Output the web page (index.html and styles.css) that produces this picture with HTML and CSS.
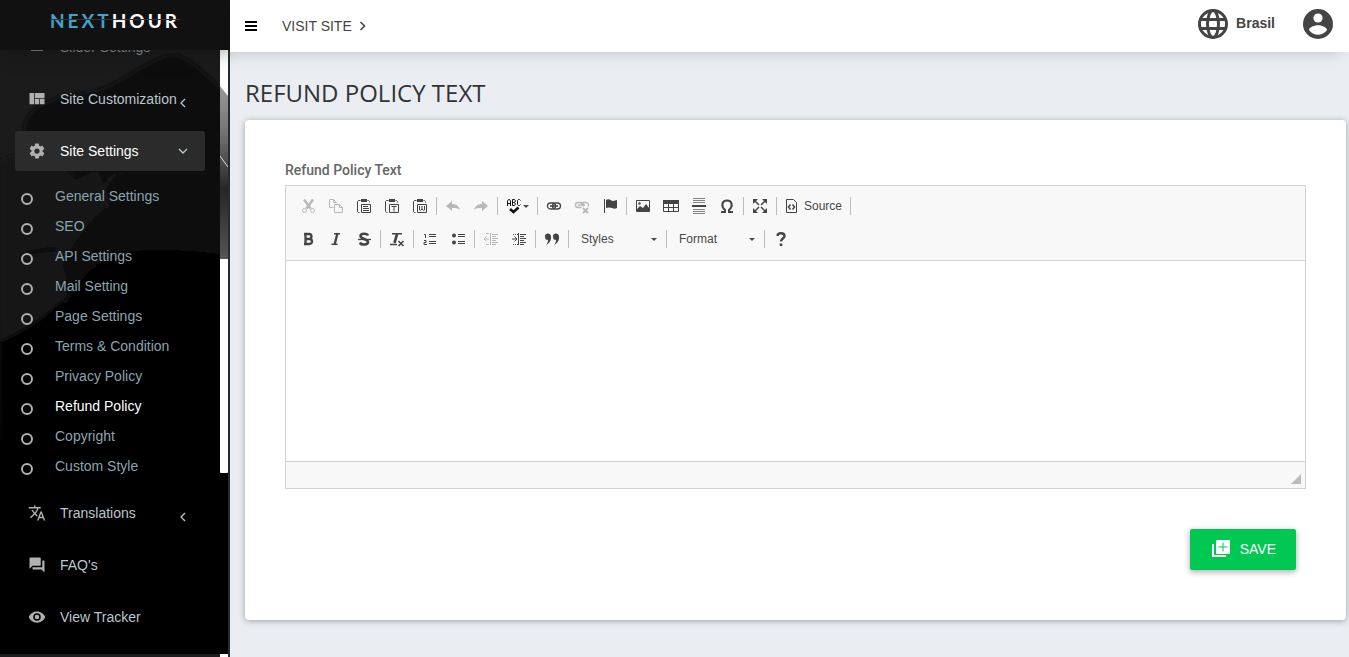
FILE: index.html
```html
<!DOCTYPE html>
<html lang="en">
<head>
<meta charset="utf-8">
<title>Refund Policy Text - Nexthour</title>
<link rel="stylesheet" href="styles.css">
</head>
<body>
<div class="app">
  <aside class="sidebar">
    <svg class="photo" viewBox="0 0 228 607" preserveAspectRatio="xMidYMin slice" aria-hidden="true">
      <defs>
        <linearGradient id="fade" x1="0" y1="0" x2="0" y2="1"><stop offset="0" stop-color="#1b1b1b"/><stop offset=".5" stop-color="#191919"/><stop offset=".75" stop-color="#000"/></linearGradient>
        <linearGradient id="hat" x1="0" y1="0" x2="0" y2="1"><stop offset="0" stop-color="#101010"/><stop offset="1" stop-color="#050505"/></linearGradient>
        <filter id="soft"><feGaussianBlur stdDeviation="2"/></filter>
      </defs>
      <rect width="228" height="607" fill="url(#fade)"/>
      <g filter="url(#soft)">
        <path d="M24 76C28 58 50 46 84 43C116 39 145 10 169 5C184 1 201 20 228 44V607H0V112C35 100 70 132 75 125C66 120 22 103 24 76Z" fill="url(#hat)"/>
        <path d="M0 112C28 96 62 110 75 130L98 120L110 155C87 170 77 190 62 214C70 233 67 245 58 257C46 270 33 275 0 292Z" fill="#161616"/>
        <path d="M12 207Q35 197 57 197L56 201Q35 203 12 207Z" fill="#070707"/>
        <path d="M58 162Q70 165 72 185M108 158Q98 144 108 132Q117 119 128 126" fill="none" stroke="#1c1c1c" stroke-width="2"/>
        <path d="M0 292C36 275 63 255 86 223C102 202 140 193 228 205V607H0Z" fill="#040404"/>
        <path d="M64 253Q85 209 129 196Q168 191 228 200" fill="none" stroke="#141414" stroke-width="3"/>
        <path d="M86 43Q143 45 186 80Q213 106 228 118" fill="none" stroke="#222"/>
      </g>
      <rect y="390" width="228" height="217" fill="#000"/>
    </svg>
    <div class="brand"><a class="logo" href="#"><span class="logo-blue">NEXT</span>HOUR</a></div>
    <nav class="scroller" aria-label="Main">
      <ul class="menu">
        <li><a class="item faded" href="#"><svg class="ic" viewBox="0 0 24 24"><path d="M4 5h16v12H4z"/></svg><span>Slider Settings</span></a></li>
        <li><a class="item" href="#"><svg class="ic" viewBox="0 0 24 24"><path d="M2 4h6v15H2zM9 4h13v7H9zM9 12h6v7H9zM16 12h6v7h-6z"/></svg><span>Site Customization</span><svg class="caret" viewBox="0 0 12 12"><path d="M8 2L4 6l4 4"/></svg></a></li>
        <li><a class="item current" href="#"><svg class="ic" viewBox="0 0 24 24"><path fill-rule="evenodd" d="M19.400 13a8 8 0 0 0 0-2l2.100-1.600c.2-.2.300-.5.100-.7l-2-3.500c-.1-.2-.4-.3-.6-.2l-2.500 1a7 7 0 0 0-1.700-1l-.4-2.600c0-.2-.2-.4-.5-.4h-4c-.2 0-.4.200-.5.400L9 5a7 7 0 0 0-1.600 1L5 5c-.3-.1-.5 0-.7.200l-2 3.500c-.1.200 0 .5.200.7L4.600 11a8 8 0 0 0 0 2l-2.100 1.600c-.2.200-.3.500-.1.700l2 3.500c.1.200.4.300.6.200l2.500-1a7 7 0 0 0 1.600 1l.4 2.600c0 .2.300.400.500.400h4c.300 0 .500-.200.500-.400l.400-2.600a7 7 0 0 0 1.600-1l2.500 1c.3.100.500 0 .700-.200l2-3.500c.1-.200 0-.500-.200-.700zM12 15.500a3.500 3.500 0 1 1 0-7 3.500 3.500 0 0 1 0 7z"/></svg><span>Site Settings</span><svg class="caret" viewBox="0 0 12 12"><path d="M2 4l4 4 4-4"/></svg></a>
          <ul class="submenu">
            <li><a href="#">General Settings</a></li>
            <li><a href="#">SEO</a></li>
            <li><a href="#">API Settings</a></li>
            <li><a href="#">Mail Setting</a></li>
            <li><a href="#">Page Settings</a></li>
            <li><a href="#">Terms &amp; Condition</a></li>
            <li><a href="#">Privacy Policy</a></li>
            <li><a class="active" href="#" aria-current="page">Refund Policy</a></li>
            <li><a href="#">Copyright</a></li>
            <li><a href="#">Custom Style</a></li>
          </ul></li>
        <li><a class="item" href="#"><svg class="ic" viewBox="0 0 24 24"><path d="M12.900 15.100l-2.500-2.500a17.500 17.500 0 0 0 3.700-6.600H17V4h-7V2H8v2H1v2h11.200A15.700 15.700 0 0 1 9 11.400 15.600 15.600 0 0 1 6.700 8h-2a17.600 17.600 0 0 0 3 4.600l-5.100 5L4 19l5-5 3.100 3.100zM18.500 10h-2L12 22h2l1.100-3h4.800l1.100 3h2zm-2.600 7l1.600-4.300 1.600 4.300z"/></svg><span>Translations</span><svg class="caret" viewBox="0 0 12 12"><path d="M8 2L4 6l4 4"/></svg></a></li>
        <li><a class="item" href="#"><svg class="ic" viewBox="0 0 24 24"><path d="M21 6h-2v9H6v2c0 .6.400 1 1 1h11l4 4V7c0-.6-.4-1-1-1zm-4 6V3c0-.6-.4-1-1-1H3c-.6 0-1 .4-1 1v14l4-4h10c.6 0 1-.4 1-1z"/></svg><span>FAQ's</span></a></li>
        <li><a class="item" href="#"><svg class="ic" viewBox="0 0 24 24"><path fill-rule="evenodd" d="M12 4.500C7 4.500 2.700 7.600 1 12c1.700 4.400 6 7.500 11 7.500s9.300-3.100 11-7.500c-1.700-4.400-6-7.500-11-7.500zM12 17a5 5 0 1 1 0-10 5 5 0 0 1 0 10zm0-8a3 3 0 1 0 0 6 3 3 0 0 0 0-6z"/></svg><span>View Tracker</span></a></li>
      </ul>
    </nav>
    <div class="track" aria-hidden="true">
      <svg class="track-photo" viewBox="0 0 8 209" preserveAspectRatio="none"><defs><linearGradient id="coat" x1="0" y1="0" x2="0" y2="1"><stop offset="0" stop-color="#999"/><stop offset=".25" stop-color="#777"/><stop offset=".4" stop-color="#555"/><stop offset=".6" stop-color="#262626"/><stop offset="1" stop-color="#555"/></linearGradient></defs><path d="M0 0H8V209H0Z" fill="#fff"/><path d="M0 36L8 46V209H0Z" fill="url(#coat)"/><path d="M0 106L8 117" stroke="#ddd"/></svg>
      <span class="thumb"></span>
    </div>
  </aside>

  <div class="page">
    <header class="topbar">
      <button class="toggle" type="button" aria-label="Toggle navigation"><svg viewBox="0 0 12 12"><path d="M0 1h12v2H0zM0 5h12v2H0zM0 9h12v2H0z"/></svg></button>
      <a class="visit" href="#">VISIT SITE<svg viewBox="0 0 8 12"><path d="M1.500 2l4 4-4 4"/></svg></a>
      <a class="language" href="#"><svg viewBox="0 0 30 30"><g fill="none" stroke="#444" stroke-width="3"><circle cx="15" cy="15" r="13.500"/><ellipse cx="15" cy="15" rx="5.500" ry="13.500"/><path d="M2.500 10.500h25M2.500 19.500h25"/></g></svg>Brasil</a>
      <a class="account" href="#" aria-label="Account"><svg viewBox="0 0 30 30"><circle cx="15" cy="15" r="15" fill="#444"/><circle cx="15" cy="9" r="4.600" fill="#fff"/><path d="M6 21c0-3 6-4.700 9-4.700s9 1.700 9 4.700a11 11 0 0 1-18 0z" fill="#fff"/></svg></a>
    </header>
    <main class="content">
      <h1>REFUND POLICY TEXT</h1>
      <form class="card">
        <label class="field-label" for="policy">Refund Policy Text</label>
        <div class="editor">
          <div class="tools">
            <div class="row">
              <button type="button" class="tool off" aria-label="Cut"><svg viewBox="0 0 16 16"><path d="M4 1.500l6.500 9M13 1.500l-6.500 9" stroke-width="2.400"/><circle cx="4.500" cy="12.500" r="2"/><circle cx="12.500" cy="12.500" r="2"/></svg></button>
              <button type="button" class="tool off" aria-label="Copy"><svg viewBox="0 0 16 16"><path d="M5.500 9.500h-4v-8h4l3 3M5.500 1.500v3h3M6.500 6.500h5l3 3v5h-8zM11.500 6.500v3h3"/></svg></button>
              <button type="button" class="tool" aria-label="Paste"><svg viewBox="0 0 16 16"><path d="M3.500 14.500h-1l-1-1v-10l1-1h2M11.500 2.500h1l1 1v1M5.500 6.500h9v8h-9zM7 8.500h5M7 10.500h6M7 12.500h6"/><path class="s" d="M5 1h6v3H5z"/></svg></button>
              <button type="button" class="tool" aria-label="Paste as plain text"><svg viewBox="0 0 16 16"><path d="M3.500 14.500h-1l-1-1v-10l1-1h2M11.500 2.500h1l1 1v1M5.500 6.500h9v8h-9zM7.500 8.500h5M10 8.500v5"/><path class="s" d="M5 1h6v3H5z"/></svg></button>
              <button type="button" class="tool" aria-label="Paste from Word"><svg viewBox="0 0 16 16"><path d="M3.500 14.500h-1l-1-1v-10l1-1h2M11.500 2.500h1l1 1v1M5.500 6.500h9v8h-9zM7.500 8v4l1 .5 1.500-1.500 1.500 1.500 1-.5V8M10 8v3"/><path class="s" d="M5 1h6v3H5z"/></svg></button>
              <i class="sep"></i>
              <button type="button" class="tool off" aria-label="Undo"><svg viewBox="0 0 16 16"><path class="s" d="M1 8l6-5v3c4 0 7 2 8 6-2-2-4-2-8-2v3z"/></svg></button>
              <button type="button" class="tool off" aria-label="Redo"><svg viewBox="0 0 16 16"><path class="s" d="M15 8L9 3v3c-4 0-7 2-8 6 2-2 4-2 8-2v3z"/></svg></button>
              <i class="sep"></i>
              <button type="button" class="tool spell" aria-label="Spell check"><svg viewBox="0 0 16 16"><path d="M1.500 8V3l1-1.500h1l1 1.500v5M1.500 5.500h3M6.500 1.500h2l1 1.500-1 1.500h-2M8.500 4.500l1 1.500-1 1.500h-2v-6M14.500 2.500l-1-1h-1l-1 1v4l1 1h1l1-1"/><path d="M4 11l3.500 3 5-4.500" stroke-width="2.500"/></svg><b class="arrow"></b></button>
              <i class="sep"></i>
              <button type="button" class="tool" aria-label="Link"><svg viewBox="0 0 16 16"><rect x="1.500" y="5" width="8" height="6" rx="3" stroke-width="1.300"/><rect x="6.500" y="5" width="8" height="6" rx="3" stroke-width="1.300"/><path d="M4 8h8" stroke-width="1.600"/></svg></button>
              <button type="button" class="tool off" aria-label="Unlink"><svg viewBox="0 0 16 16"><path d="M7.500 9.500H4a2.500 2.500 0 0 1 0-5h3a2.500 2.500 0 0 1 2 4M7 7a2.500 2.500 0 0 1 2-2.500h3a2.500 2.500 0 0 1 2 4M4 7h7" stroke-width="1.400"/><path d="M9 10l5 5M14 10l-5 5" stroke-width="1.800"/></svg></button>
              <button type="button" class="tool" aria-label="Anchor"><svg viewBox="0 0 16 16"><path d="M2.500 1v14"/><path class="s" d="M4 2c3-2 5 1 7 1 1 0 3-1 4-1v8c-2 1-3 1-5 0-2-.8-4-.8-6 0z"/></svg></button>
              <i class="sep"></i>
              <button type="button" class="tool" aria-label="Image"><svg viewBox="0 0 16 16"><path d="M1.500 2.500h13v11h-13z"/><path class="s" d="M2 13v-2l3-3 3 2 3-4 3 4v3z"/><circle class="s" cx="4.500" cy="5.500" r="1.200"/></svg></button>
              <button type="button" class="tool" aria-label="Table"><svg viewBox="0 0 16 16"><path d="M.5 2.500h15v11H.5zM.5 9.500h15M5.500 5v8M10.500 5v8"/><path class="s" d="M0 2h16v4H0z"/></svg></button>
              <button type="button" class="tool" aria-label="Horizontal line"><svg viewBox="0 0 16 16"><path d="M2 .500h12M2 2.500h12M2 4.500h12M2 11.500h12M2 13.500h12M2 15.500h12" opacity=".65"/><path d="M1 8h14" stroke-width="2"/></svg></button>
              <button type="button" class="tool" aria-label="Special character"><svg viewBox="0 0 16 16"><path d="M2 14h4v-2C1.500 8 3 2.500 8 2.500s6.500 5.500 2 9.500v2h4" stroke-width="2"/></svg></button>
              <i class="sep"></i>
              <button type="button" class="tool" aria-label="Maximize"><svg viewBox="0 0 16 16"><path class="s" d="M1 1h5L1 6zM15 1v5l-5-5zM1 15v-5l5 5zM15 15h-5l5-5z"/><path d="M3 3l4 4M13 3L9 7M3 13l4-4M13 13L9 9" stroke-width="1.500"/></svg></button>
              <i class="sep"></i>
              <button type="button" class="tool source"><svg viewBox="0 0 16 16"><path d="M2.500 1.500h7l3 3v10h-10z"/><path d="M6.500 6.500L4.500 9l2 2.500M8.500 6.500l2 2.500-2 2.500" stroke-width="1.500"/></svg>Source</button>
              <i class="sep"></i>
            </div>
            <div class="row">
              <button type="button" class="tool" aria-label="Bold"><svg viewBox="0 0 16 16"><path d="M5.500 3v10M4 3h5a2.400 2.400 0 0 1 0 5H6h3.500a2.500 2.500 0 0 1 0 5H4" stroke-width="2.300"/></svg></button>
              <button type="button" class="tool" aria-label="Italic"><svg viewBox="0 0 16 16"><path d="M9.500 2l-3 12" stroke-width="2.300"/><path d="M6 2.700h6M3.500 13.300h6" stroke-width="1.600"/></svg></button>
              <button type="button" class="tool" aria-label="Strikethrough"><svg viewBox="0 0 16 16"><path d="M12 4.500C11 2 4.500 2 4.500 5S12 8 12 11s-7 3.500-8 .5" stroke-width="2.600"/><path d="M2 8.500h13" stroke-width="1.300"/></svg></button>
              <i class="sep"></i>
              <button type="button" class="tool" aria-label="Remove format"><svg viewBox="0 0 16 16"><path d="M8 3L5.500 12" stroke-width="2.700"/><path d="M3 2.700h10M1 13.500h7M9.500 10l5 5M14.500 10l-5 5" stroke-width="1.600"/></svg></button>
              <i class="sep"></i>
              <button type="button" class="tool" aria-label="Numbered list"><svg viewBox="0 0 16 16"><path d="M2 3.500h1.500V7M2 9.500h2v2H2v2h3M7 3.500h7M7 5.500h7M7 10.500h7M7 12.500h7"/></svg></button>
              <button type="button" class="tool" aria-label="Bulleted list"><svg viewBox="0 0 16 16"><circle class="s" cx="4" cy="4.500" r="2"/><circle class="s" cx="4" cy="11.500" r="2"/><path d="M8 3.500h7M8 5.500h7M8 10.500h7M8 12.500h7"/></svg></button>
              <i class="sep"></i>
              <button type="button" class="tool off" aria-label="Decrease indent"><svg viewBox="0 0 16 16"><path d="M7.500 2v12M9 3.500h6M9 5.500h4M9 7.500h6M9 9.500h4M9 11.500h6M9 13.500h4M6 8H1M3.500 5.500L1 8l2.500 2.500M3 2.500h3M3 13.500h3"/></svg></button>
              <button type="button" class="tool" aria-label="Increase indent"><svg viewBox="0 0 16 16"><path d="M7.500 2v12M9 3.500h6M9 5.500h4M9 7.500h6M9 9.500h4M9 11.500h6M9 13.500h4M1 8h5M3.500 5.500L6 8l-2.500 2.500"/><path d="M2 3.500h5M2 13.500h5" stroke-dasharray="1 1"/></svg></button>
              <i class="sep"></i>
              <button type="button" class="tool" aria-label="Block quote"><svg viewBox="0 0 16 16"><path class="s" d="M1 6a3 3 0 0 1 6-1c.5 4-1 7-5 9 1.500-2 2-3 2-5a3 3 0 0 1-3-3zM9 6a3 3 0 0 1 6-1c.5 4-1 7-5 9 1.500-2 2-3 2-5a3 3 0 0 1-3-3z"/></svg></button>
              <i class="sep"></i>
              <span class="combo"><select aria-label="Styles"><option>Styles</option></select><b class="arrow"></b></span>
              <i class="sep"></i>
              <span class="combo"><select aria-label="Format"><option>Format</option></select><b class="arrow"></b></span>
              <i class="sep"></i>
              <button type="button" class="tool" aria-label="About"><svg viewBox="0 0 16 16"><path d="M4.500 5C4.500 1 11.500 1.500 11.500 5c0 2.500-3.500 2.500-3.500 5.500" stroke-width="2.400"/><path class="s" d="M6.700 12.500h2.600V15H6.700z"/></svg></button>
            </div>
          </div>
          <textarea id="policy" class="text"></textarea>
          <div class="status"><i class="grip"></i></div>
        </div>
        <div class="actions">
          <button class="save" type="submit"><svg viewBox="0 0 18 18"><path d="M1 4v12h13" fill="none" stroke="#fff" stroke-width="2"/><path fill="#fff" fill-rule="evenodd" d="M5 0h12q1 0 1 1v12q0 1-1 1H5q-1 0-1-1V1q0-1 1-1zM10.500 2.500v4h-4v1h4v4h1v-4h4v-1h-4v-4z"/></svg>SAVE</button>
        </div>
      </form>
    </main>
  </div>
</div>
</body>
</html>
```

FILE: styles.css
```css
*, *::before, *::after { box-sizing: border-box; }
body { margin: 0; font-family: "Liberation Sans", Arial, sans-serif; font-size: 14px; color: #444; background: #eaeef3; }
a { color: inherit; text-decoration: none; }
button { font: inherit; border: 0; padding: 0; background: none; color: inherit; cursor: pointer; }
ul { list-style: none; margin: 0; padding: 0; }

.app { display: flex; min-height: 100vh; }

.sidebar { position: relative; flex: 0 0 230px; height: 100vh; display: grid; grid-template-columns: minmax(0, 1fr) 8px; grid-template-rows: 50px minmax(0, 1fr); background: #000; border-right: 2px solid #222d32; }
.photo { position: absolute; top: 50px; left: 0; width: 100%; height: calc(100% - 50px); }
.brand { position: relative; z-index: 2; grid-column: 1 / 3; margin-right: -2px; background: #111; box-shadow: 0 0 20px #1118; display: flex; justify-content: center; align-items: flex-start; padding: 9px 0 0 0; }
.logo { position: relative; font-family: Lato, sans-serif; font-size: 19px; line-height: 24px; font-weight: 700; letter-spacing: 3px; color: #fff; }
.logo-blue { color: #41a3cb; }
.logo::after { content: ""; position: absolute; left: 0; right: 0; top: 10px; height: 1px; background: #333; }
.scroller { position: relative; overflow: hidden; border-bottom: 3px solid #1b1a1c; }
.menu { margin: -23px 15px 0; }
.item { display: flex; align-items: center; height: 40px; margin-bottom: 12px; padding: 0 16px 0 13px; border-radius: 3px; color: #b8c7ce; }
.item span { flex: 1; white-space: nowrap; }
.ic { width: 18px; height: 18px; margin-right: 14px; fill: #b0b0b0; }
.faded { color: #8a979d; }
.current { color: #fff; background: #2b2b2b; margin-bottom: 10px; }
.caret { width: 12px; height: 12px; margin-left: -4px; fill: none; stroke: #b8c7ce; stroke-width: 1.3; }
.item:not(.current) .caret { margin-top: 7px; }
.submenu { margin-bottom: 12px; }
.submenu a { display: flex; align-items: center; height: 30px; padding-left: 6px; color: #8aa4af; }
.submenu a::before { content: ""; width: 12px; height: 12px; margin: 6px 22px 0 0; border: 2px solid #b0b0b0; border-radius: 50%; }
.submenu a.active { color: #fff; }
.track { position: relative; display: flex; flex-direction: column; border-bottom: 3px solid #fff; }
.track-photo { width: 8px; height: 209px; }
.thumb { height: 214px; background: #fff; border-radius: 0 0 1px 1px; }

.page { flex: 1; min-width: 0; }
.topbar { position: relative; z-index: 3; display: flex; align-items: center; height: 52px; padding: 0 16px 0 15px; background: #fff; box-shadow: 0 8px 16px -8px #0003; }
.toggle { display: flex; }
.toggle svg { width: 12px; height: 12px; fill: #000; }
.visit { display: flex; align-items: center; gap: 7px; margin-left: 25px; }
.visit svg { width: 8px; height: 12px; fill: none; stroke: #444; stroke-width: 1.6; }
.language { display: flex; align-items: center; gap: 8px; margin-left: auto; height: 46px; align-self: flex-start; font-weight: 700; }
.language svg, .account svg { display: block; width: 30px; height: 30px; }
.language svg { margin-top: 2px; }
.account { margin-left: 28px; align-self: flex-start; padding-top: 9px; }

.content { padding: 24px 3px 37px 15px; }
h1 { margin: 0 0 10px; font-family: "Open Sans", sans-serif; font-size: 24px; line-height: 34px; font-weight: 400; color: #333; }
.card { min-height: 500px; padding: 40px; background: #fff; border-radius: 4px; box-shadow: 0 1px 6px #0005; }
.field-label { display: block; font-family: Roboto, sans-serif; font-size: 14px; line-height: 20px; font-weight: 500; color: #666; margin-bottom: 5px; }
.editor { border: 1px solid #d1d1d1; }
.tools { padding: 6px 8px 7px; background: #f8f8f8; border-bottom: 1px solid #d1d1d1; font-size: 12px; color: #484848; }
.row { display: flex; align-items: center; height: 28px; }
.row + .row { margin-top: 5px; }
.tool { display: flex; align-items: center; justify-content: center; width: 28px; height: 28px; }
.tool svg { width: 16px; height: 16px; fill: none; stroke: #444; }
.tool svg .s { fill: #444; stroke: none; }
.off { opacity: .35; }
.spell { width: 35px; gap: 1px; }
.spell svg { stroke: #111; }
.source { width: auto; padding: 0 6px 0 5px; gap: 4px; }
.sep { width: 1px; height: 18px; margin: 0 2px; background: #bcbcbc; }
.arrow { border: 3px solid transparent; border-top-color: #484848; border-bottom: 0; }
.combo { display: flex; align-items: center; width: 93px; height: 28px; padding: 0 7px 0 10px; }
.combo select { flex: 1; min-width: 0; appearance: none; border: 0; padding: 0; background: none; font: inherit; color: inherit; }
.text { display: block; width: 100%; height: 200px; padding: 20px; border: 0; resize: none; background: #fff; font: inherit; }
.status { display: flex; justify-content: flex-end; align-items: flex-end; height: 27px; padding: 4px; background: #f8f8f8; border-top: 1px solid #d1d1d1; }
.grip { border-left: 10px solid transparent; border-bottom: 10px solid #bcbcbc; }
.actions { display: flex; justify-content: flex-end; padding: 40px 10px 0 0; }
.save { display: flex; align-items: center; gap: 10px; height: 41px; padding: 0 20px 2px 22px; border-radius: 2px; background: #00c853; color: #fff; box-shadow: 0 2px 6px #0005; }
.save svg { width: 18px; height: 18px; }
```
